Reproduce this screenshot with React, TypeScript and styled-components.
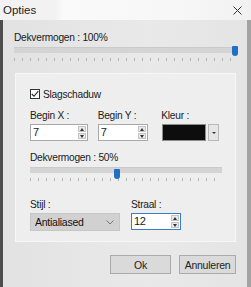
import React from "react";
import styled, { createGlobalStyle } from "styled-components";

const Global = createGlobalStyle`
  html, body { margin: 0; padding: 0; background: #e2e2e2; }
  * { box-sizing: border-box; }
`;

const Window = styled.div`
  width: 251px;
  height: 287px;
  display: flex;
  flex-direction: column;
  font-family: "Liberation Sans Narrow", "Liberation Sans", Arial, sans-serif;
  font-size: 10.2px;
  letter-spacing: -0.25px;
  color: #1a1a1a;
  overflow: hidden;
`;

const TitleBar = styled.div`
  height: 20px;
  flex: none;
  display: flex;
  align-items: center;
  justify-content: space-between;
  padding: 0 9px 0 3px;
  background: linear-gradient(90deg, #f2f2f2 0%, #f2f2f2 22%, #fafafa 25%, #f7f7f7 70%, #f1f1f1 100%);
  font-size: 11.5px;
  letter-spacing: 0;
  color: #222;
`;

const Body = styled.div`
  flex: 1;
  display: flex;
  flex-direction: column;
  padding: 12px 11px 0 11px;
  background: linear-gradient(90deg, #e2e2e2 0%, #e6e6e6 30%, #e9e9e9 60%, #e4e4e4 100%);
  border-left: 3px solid #4d4d4d;
  border-right: 4px solid #a3a3a3;
`;

const Label = styled.div`
  line-height: 12px;
  height: 12px;
  white-space: nowrap;
`;

const SliderWrap = styled.div<{ $w: number }>`
  position: relative;
  width: ${(p) => p.$w}px;
  height: 17px;
`;

const Track = styled.div`
  height: 6px;
  margin-top: 3px;
  background: #d4d4d4;
  border-top: 1px solid #cacaca;
`;

const Ticks = styled.div`
  height: 3px;
  margin-top: 5px;
  background: repeating-linear-gradient(90deg, #b4b4b4 0 1px, transparent 1px 8px);
`;

const Thumb = styled.div<{ $pos: number }>`
  position: absolute;
  top: 2px;
  left: ${(p) => p.$pos}px;
  width: 6px;
  height: 10px;
  background: #1f6fc5;
  border-radius: 1px 1px 3px 3px;
`;

const Group = styled.div`
  margin: 12px 0 0 1px;
  width: 221px;
  height: 169px;
  background: #eeeeee;
  border: 1px solid #f7f7f7;
  padding: 14px 14px 0 14px;
  display: flex;
  flex-direction: column;
`;

const CheckRow = styled.label`
  display: flex;
  align-items: center;
  gap: 3px;
  height: 12px;
`;

const Box = styled.span`
  width: 10px;
  height: 10px;
  border: 1px solid #333;
  background: #fff;
  display: flex;
  align-items: center;
  justify-content: center;
`;

const FieldRow = styled.div<{ $mt: number }>`
  display: flex;
  margin-top: ${(p) => p.$mt}px;
`;

const Field = styled.div<{ $w: number }>`
  width: ${(p) => p.$w}px;
  display: flex;
  flex-direction: column;
  gap: 2px;
`;

const Spin = styled.div<{ $w: number; $focus?: boolean }>`
  width: ${(p) => p.$w}px;
  height: 17px;
  display: flex;
  background: #fff;
  border: 1px solid ${(p) => (p.$focus ? "#3b7ec6" : "#a8a8a8")};
`;

const SpinValue = styled.div`
  flex: 1;
  padding-left: 2px;
  line-height: 15px;
  font-size: 11px;
`;

const SpinButtons = styled.div`
  width: 10px;
  display: flex;
  flex-direction: column;
  padding: 1px;
  gap: 1px;
`;

const Arrow = styled.div<{ $up?: boolean }>`
  flex: 1;
  display: flex;
  align-items: center;
  justify-content: center;
  background: #e9e9e9;
  border: 1px solid #c4c4c4;
  &::after {
    content: "";
    border-left: 2px solid transparent;
    border-right: 2px solid transparent;
    ${(p) => (p.$up ? "border-bottom: 3px solid #333;" : "border-top: 3px solid #333;")}
  }
`;

const ColorPick = styled.div`
  display: flex;
  gap: 2px;
  height: 17px;
  padding-left: 1px;
`;

const Swatch = styled.div`
  width: 44px;
  height: 17px;
  background: #0d0d0d;
  border: 1px solid #8c8c8c;
`;

const DropBtn = styled.div`
  width: 11px;
  height: 17px;
  background: #e6e6e6;
  border: 1px solid #b8b8b8;
  display: flex;
  align-items: center;
  justify-content: center;
  &::after {
    content: "";
    border-left: 2px solid transparent;
    border-right: 2px solid transparent;
    border-top: 2px solid #333;
  }
`;

const Section = styled.div`
  margin-top: 11px;
`;

const Select = styled.div`
  width: 90px;
  height: 18px;
  background: #d1d1d1;
  border: 1px solid #c6c6c6;
  display: flex;
  align-items: center;
  justify-content: space-between;
  padding: 0 5px 0 4px;
  font-size: 10.5px;
  color: #111;
`;

const Footer = styled.div`
  display: flex;
  justify-content: flex-end;
  gap: 8px;
  margin-top: 13px;
`;

const Button = styled.div<{ $w: number }>`
  width: ${(p) => p.$w}px;
  height: 19px;
  display: flex;
  align-items: center;
  justify-content: center;
  background: #dadada;
  border: 1px solid #ababab;
  color: #222;
  font-size: 10.5px;
`;

function Slider({ w, pos }: { w: number; pos: number }) {
  return (
    <SliderWrap $w={w}>
      <Track />
      <Ticks />
      <Thumb $pos={pos} />
    </SliderWrap>
  );
}

function SpinBox({ w, value, focus }: { w: number; value: string; focus?: boolean }) {
  return (
    <Spin $w={w} $focus={focus}>
      <SpinValue>{value}</SpinValue>
      <SpinButtons>
        <Arrow $up />
        <Arrow />
      </SpinButtons>
    </Spin>
  );
}

export default function App() {
  return (
    <>
      <Global />
      <Window>
        <TitleBar>
          <span>Opties</span>
          <svg width="9" height="9" viewBox="0 0 9 9">
            <path d="M0.5 0.5 L8.5 8.5 M8.5 0.5 L0.5 8.5" stroke="#333" strokeWidth="1" />
          </svg>
        </TitleBar>
        <Body>
          <Label>Dekvermogen : 100%</Label>
          <Slider w={223} pos={218} />
          <Group>
            <CheckRow>
              <Box>
                <svg width="8" height="8" viewBox="0 0 8 8">
                  <path d="M0.8 4 L3 6.3 L7.3 1.2" fill="none" stroke="#222" strokeWidth="1.1" />
                </svg>
              </Box>
              <span>Slagschaduw</span>
            </CheckRow>
            <FieldRow $mt={10}>
              <Field $w={68}>
                <Label>Begin X :</Label>
                <SpinBox w={58} value="7" />
              </Field>
              <Field $w={64}>
                <Label>Begin Y :</Label>
                <SpinBox w={50} value="7" />
              </Field>
              <Field $w={60}>
                <Label>Kleur :</Label>
                <ColorPick>
                  <Swatch />
                  <DropBtn />
                </ColorPick>
              </Field>
            </FieldRow>
            <Section>
              <Label>Dekvermogen : 50%</Label>
              <Slider w={192} pos={84} />
            </Section>
            <FieldRow $mt={15}>
              <Field $w={101}>
                <Label>Stijl :</Label>
                <Select>
                  <span>Antialiased</span>
                  <svg width="8" height="5" viewBox="0 0 8 5">
                    <path d="M0.5 0.5 L4 4 L7.5 0.5" fill="none" stroke="#777" strokeWidth="1" />
                  </svg>
                </Select>
              </Field>
              <Field $w={52}>
                <Label>Straal :</Label>
                <SpinBox w={50} value="12" focus />
              </Field>
            </FieldRow>
          </Group>
          <Footer>
            <Button $w={61}>Ok</Button>
            <Button $w={57}>Annuleren</Button>
          </Footer>
        </Body>
      </Window>
    </>
  );
}
